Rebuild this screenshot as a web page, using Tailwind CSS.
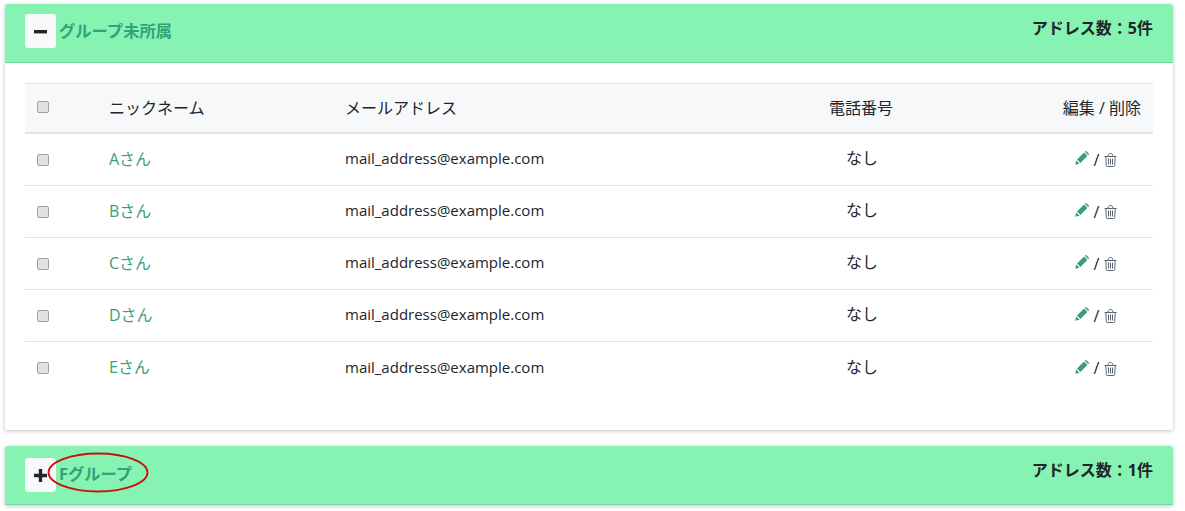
<!DOCTYPE html>
<html lang="ja">
<head>
<meta charset="UTF-8">
<title>アドレス帳</title>
<script src="https://cdn.jsdelivr.net/npm/@tailwindcss/browser@4"></script>
</head>
<body class="bg-white h-[511px] overflow-hidden font-['Open_Sans','Noto_Sans_CJK_JP',sans-serif] text-[#212529]">
<div class="pt-1 px-[5px] w-[1178px]">

  <!-- group 1 -->
  <section class="bg-white rounded-[3px] shadow-[0_1px_4px_rgba(0,0,0,0.25)] h-[426px]">
    <header class="h-[59px] bg-[#86f3b2] rounded-t-[3px] border-b border-[#76d8a0] flex justify-between pl-5 pr-5">
      <div class="flex items-start pt-[10px]">
        <button class="w-[31px] h-[34px] bg-[#f8f9fa] rounded-[3px] flex items-center justify-center">
          <svg width="13" height="13" viewBox="0 0 13 13"><rect x="0" y="5" width="13" height="3.4" fill="#212529"/></svg>
        </button>
        <span class="ml-[3px] mt-[6px] text-[16.3px] leading-[22px] font-bold text-[#2fa37a]">グループ未所属</span>
      </div>
      <div class="pt-[13px] text-[16px] leading-[22px] font-bold text-[#212529]">アドレス数：5件</div>
    </header>

    <div class="px-5 pt-5">
      <div class="border-t border-[#dee2e6]">
        <div class="grid grid-cols-[84px_236px_396px_240px_172px] h-[50px] items-center bg-[#f7f8fa] border-b-2 border-[#e0e0ea] text-[16px]">
          <div class="pl-3 flex -mt-[3px]"><input type="checkbox" class="appearance-none w-[12px] h-[12px] bg-[#e2e2e2] border border-[#a0a0a0] rounded-[2px]"></div>
          <div>ニックネーム</div>
          <div>メールアドレス</div>
          <div class="text-center">電話番号</div>
          <div class="text-right pr-3">編集 / 削除</div>
        </div>

        <div class="grid grid-cols-[84px_236px_396px_240px_172px] h-[52px] items-center border-b border-[#dee2e6] text-[15px]">
          <div class="pl-3 flex"><input type="checkbox" class="appearance-none w-[12px] h-[12px] bg-[#e2e2e2] border border-[#a0a0a0] rounded-[2px]"></div>
          <a class="text-[16px] text-[#3c9d7c] -mt-[2px]">Aさん</a>
          <div class="-mt-[2px]">mail_address@example.com</div>
          <div class="text-center text-[16px] -mt-[3px] pl-[2px]">なし</div>
          <div class="flex items-center justify-center pl-[58px] gap-[5px]">
            <svg class="-mt-[3px]" width="14" height="14" viewBox="0 0 14 14" fill="#3c9d7c"><path d="M.3 13.7 1.2 9.4l3.4 3.4zM2 8.6 9 1.6l3.4 3.4-7 7zM9.8.8l.6-.6c.3-.3.7-.3 1 0l2.4 2.4c.3.3.3.7 0 1l-.6.6z"/></svg>
            <span class="text-[16px] leading-none">/</span>
            <svg class="mt-[1px]" width="13" height="14" viewBox="0 0 13 14" fill="none" stroke="#5a6570"><path d="M.5 3.5h12M4 3.5c.2-2 .8-3 2.5-3s2.300 1 2.500 3M1.800 3.500l.5 9.200q.1.800 1 .800h6.400q.9 0 1-.8l.5-9.200M4.500 5.500v6M6.500 5.500v6M8.500 5.500v6"/></svg>
          </div>
        </div>

        <div class="grid grid-cols-[84px_236px_396px_240px_172px] h-[52px] items-center border-b border-[#dee2e6] text-[15px]">
          <div class="pl-3 flex"><input type="checkbox" class="appearance-none w-[12px] h-[12px] bg-[#e2e2e2] border border-[#a0a0a0] rounded-[2px]"></div>
          <a class="text-[16px] text-[#3c9d7c] -mt-[2px]">Bさん</a>
          <div class="-mt-[2px]">mail_address@example.com</div>
          <div class="text-center text-[16px] -mt-[3px] pl-[2px]">なし</div>
          <div class="flex items-center justify-center pl-[58px] gap-[5px]">
            <svg class="-mt-[3px]" width="14" height="14" viewBox="0 0 14 14" fill="#3c9d7c"><path d="M.3 13.7 1.2 9.4l3.4 3.4zM2 8.6 9 1.6l3.4 3.4-7 7zM9.8.8l.6-.6c.3-.3.7-.3 1 0l2.4 2.4c.3.3.3.7 0 1l-.6.6z"/></svg>
            <span class="text-[16px] leading-none">/</span>
            <svg class="mt-[1px]" width="13" height="14" viewBox="0 0 13 14" fill="none" stroke="#5a6570"><path d="M.5 3.5h12M4 3.5c.2-2 .8-3 2.5-3s2.300 1 2.500 3M1.800 3.500l.5 9.200q.1.800 1 .800h6.400q.9 0 1-.8l.5-9.200M4.500 5.500v6M6.500 5.500v6M8.500 5.500v6"/></svg>
          </div>
        </div>

        <div class="grid grid-cols-[84px_236px_396px_240px_172px] h-[52px] items-center border-b border-[#dee2e6] text-[15px]">
          <div class="pl-3 flex"><input type="checkbox" class="appearance-none w-[12px] h-[12px] bg-[#e2e2e2] border border-[#a0a0a0] rounded-[2px]"></div>
          <a class="text-[16px] text-[#3c9d7c] -mt-[2px]">Cさん</a>
          <div class="-mt-[2px]">mail_address@example.com</div>
          <div class="text-center text-[16px] -mt-[3px] pl-[2px]">なし</div>
          <div class="flex items-center justify-center pl-[58px] gap-[5px]">
            <svg class="-mt-[3px]" width="14" height="14" viewBox="0 0 14 14" fill="#3c9d7c"><path d="M.3 13.7 1.2 9.4l3.4 3.4zM2 8.6 9 1.6l3.4 3.4-7 7zM9.8.8l.6-.6c.3-.3.7-.3 1 0l2.4 2.4c.3.3.3.7 0 1l-.6.6z"/></svg>
            <span class="text-[16px] leading-none">/</span>
            <svg class="mt-[1px]" width="13" height="14" viewBox="0 0 13 14" fill="none" stroke="#5a6570"><path d="M.5 3.5h12M4 3.5c.2-2 .8-3 2.5-3s2.300 1 2.500 3M1.800 3.500l.5 9.200q.1.800 1 .800h6.400q.9 0 1-.8l.5-9.200M4.500 5.500v6M6.500 5.500v6M8.500 5.500v6"/></svg>
          </div>
        </div>

        <div class="grid grid-cols-[84px_236px_396px_240px_172px] h-[52px] items-center border-b border-[#dee2e6] text-[15px]">
          <div class="pl-3 flex"><input type="checkbox" class="appearance-none w-[12px] h-[12px] bg-[#e2e2e2] border border-[#a0a0a0] rounded-[2px]"></div>
          <a class="text-[16px] text-[#3c9d7c] -mt-[2px]">Dさん</a>
          <div class="-mt-[2px]">mail_address@example.com</div>
          <div class="text-center text-[16px] -mt-[3px] pl-[2px]">なし</div>
          <div class="flex items-center justify-center pl-[58px] gap-[5px]">
            <svg class="-mt-[3px]" width="14" height="14" viewBox="0 0 14 14" fill="#3c9d7c"><path d="M.3 13.7 1.2 9.4l3.4 3.4zM2 8.6 9 1.6l3.4 3.4-7 7zM9.8.8l.6-.6c.3-.3.7-.3 1 0l2.4 2.4c.3.3.3.7 0 1l-.6.6z"/></svg>
            <span class="text-[16px] leading-none">/</span>
            <svg class="mt-[1px]" width="13" height="14" viewBox="0 0 13 14" fill="none" stroke="#5a6570"><path d="M.5 3.5h12M4 3.5c.2-2 .8-3 2.5-3s2.300 1 2.500 3M1.800 3.500l.5 9.200q.1.800 1 .800h6.400q.9 0 1-.8l.5-9.200M4.500 5.500v6M6.500 5.500v6M8.500 5.500v6"/></svg>
          </div>
        </div>

        <div class="grid grid-cols-[84px_236px_396px_240px_172px] h-[52px] items-center text-[15px]">
          <div class="pl-3 flex"><input type="checkbox" class="appearance-none w-[12px] h-[12px] bg-[#e2e2e2] border border-[#a0a0a0] rounded-[2px]"></div>
          <a class="text-[16px] text-[#3c9d7c] -mt-[2px]">Eさん</a>
          <div class="-mt-[2px]">mail_address@example.com</div>
          <div class="text-center text-[16px] -mt-[3px] pl-[2px]">なし</div>
          <div class="flex items-center justify-center pl-[58px] gap-[5px]">
            <svg class="-mt-[3px]" width="14" height="14" viewBox="0 0 14 14" fill="#3c9d7c"><path d="M.3 13.7 1.2 9.4l3.4 3.4zM2 8.6 9 1.6l3.4 3.4-7 7zM9.8.8l.6-.6c.3-.3.7-.3 1 0l2.4 2.4c.3.3.3.7 0 1l-.6.6z"/></svg>
            <span class="text-[16px] leading-none">/</span>
            <svg class="mt-[1px]" width="13" height="14" viewBox="0 0 13 14" fill="none" stroke="#5a6570"><path d="M.5 3.5h12M4 3.5c.2-2 .8-3 2.5-3s2.300 1 2.500 3M1.800 3.500l.5 9.200q.1.800 1 .800h6.400q.9 0 1-.8l.5-9.200M4.500 5.500v6M6.500 5.500v6M8.500 5.500v6"/></svg>
          </div>
        </div>
      </div>
    </div>
  </section>

  <!-- group 2 -->
  <section class="mt-4 rounded-[3px] shadow-[0_1px_4px_rgba(0,0,0,0.25)]">
    <header class="h-[59px] bg-[#86f3b2] rounded-t-[3px] border-b border-[#76d8a0] flex justify-between pl-5 pr-5">
      <div class="relative flex items-start pt-[12px]">
        <button class="w-[31px] h-[34px] bg-[#f8f9fa] rounded-[3px] flex items-center justify-center">
          <svg width="13" height="13" viewBox="0 0 13 13"><path d="M0 4.800h4.800V0h3.400v4.800H13v3.400H8.200V13H4.800V8.200H0z" fill="#212529"/></svg>
        </button>
        <span class="ml-[3px] mt-[5px] text-[16.3px] leading-[22px] font-bold text-[#2fa37a]">Fグループ</span>
        <svg class="absolute left-[22px] top-[6px]" width="102" height="41" viewBox="0 0 102 41" fill="none"><ellipse cx="51" cy="20.5" rx="49.5" ry="19" stroke="#c81010" stroke-width="1.8"/></svg>
      </div>
      <div class="pt-[13px] text-[16px] leading-[22px] font-bold text-[#212529]">アドレス数：1件</div>
    </header>
  </section>
</div>
</body>
</html>
